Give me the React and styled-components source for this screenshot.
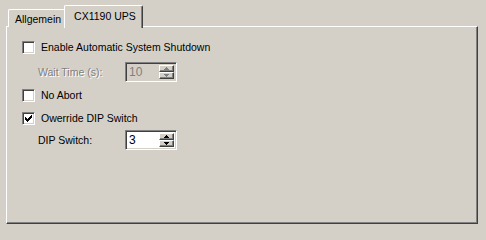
import React from "react";
import styled, { createGlobalStyle } from "styled-components";

const Global = createGlobalStyle`
  html, body { margin: 0; padding: 0; background: #d4d0c8; }
  body { width: 486px; height: 233px; overflow: hidden; }
  * { box-sizing: border-box; }
`;

const Window = styled.div`
  width: 486px;
  height: 233px;
  background: #d4d0c8;
  padding: 5px 0 0 6px;
  font-family: "Liberation Sans", Arial, sans-serif;
  font-size: 10.5px;
  color: #000;
`;

const TabStrip = styled.div`
  display: flex;
  align-items: flex-end;
  height: 22px;
  padding-left: 2px;
  position: relative;
  z-index: 2;
`;

const Tab = styled.div`
  display: flex;
  align-items: center;
  height: ${(p) => (p.$active ? "23px" : "18px")};
  margin-bottom: ${(p) => (p.$active ? "-1px" : "0")};
  margin-left: ${(p) => (p.$active ? "-1px" : "0")};
  padding: ${(p) => (p.$active ? "0 6px 2px 9px" : "1px 4px 0 6px")};
  background: #d4d0c8;
  border-top: 1px solid #fff;
  border-left: 1px solid #fff;
  border-right: ${(p) => (p.$active ? "1px solid #404040" : "none")};
  box-shadow: ${(p) => (p.$active ? "inset -1px 0 0 #808080" : "none")};
  border-top-left-radius: 2px;
  border-top-right-radius: 2px;
  white-space: nowrap;
`;

const Panel = styled.div`
  width: 472px;
  height: 198px;
  margin-top: -1px;
  border-top: 1px solid #fff;
  border-left: 1px solid #fff;
  border-right: 1px solid #404040;
  border-bottom: 1px solid #404040;
  box-shadow: inset -1px -1px 0 #808080;
  padding: 10px 0 0 14px;
  display: flex;
  flex-direction: column;
`;

const Row = styled.div`
  display: flex;
  align-items: center;
  height: 20px;
  margin-top: ${(p) => p.$gap || 0}px;
  padding-left: ${(p) => p.$indent || 0}px;
`;

const Box = styled.span`
  width: 13px;
  height: 13px;
  flex: none;
  background: #fff;
  border-top: 1px solid #808080;
  border-left: 1px solid #808080;
  border-right: 1px solid #fff;
  border-bottom: 1px solid #fff;
  box-shadow: inset 1px 1px 0 #404040, inset -1px -1px 0 #d4d0c8;
  display: flex;
  align-items: center;
  justify-content: center;
  margin-right: 6px;
`;

const Label = styled.span`
  white-space: nowrap;
  color: ${(p) => (p.$disabled ? "#808080" : "#000")};
  text-shadow: ${(p) => (p.$disabled ? "1px 1px 0 #fff" : "none")};
`;

const FieldLabel = styled(Label)`
  width: 87px;
`;

const Spin = styled.div`
  width: 52px;
  height: 20px;
  display: flex;
  background: ${(p) => (p.$disabled ? "#d4d0c8" : "#fff")};
  border-top: 1px solid #808080;
  border-left: 1px solid #808080;
  border-right: 1px solid #fff;
  border-bottom: 1px solid #fff;
  box-shadow: inset 1px 1px 0 #404040, inset -1px -1px 0 #d4d0c8;
  padding: 2px 2px 2px 3px;
`;

const SpinValue = styled.span`
  flex: 1;
  display: flex;
  align-items: center;
  font-size: 12px;
  color: ${(p) => (p.$disabled ? "#808080" : "#000")};
`;

const Buttons = styled.div`
  width: 15px;
  display: flex;
  flex-direction: column;
`;

const SpinBtn = styled.div`
  flex: 1;
  background: #d4d0c8;
  border-top: 1px solid #fff;
  border-left: 1px solid #fff;
  border-right: 1px solid #404040;
  border-bottom: 1px solid #404040;
  box-shadow: inset -1px -1px 0 #808080;
  display: flex;
  align-items: center;
  justify-content: center;
`;

const Check = () => (
  <svg width="7" height="7" viewBox="0 0 7 7">
    <path d="M0 2h1v1h1v1h1v-1h1v-1h1v-1h1v-1h1v3h-1v1h-1v1h-1v1h-1v1h-1v-1h-1v-1h-1z" fill="#000" />
  </svg>
);

const Arrow = ({ up, color }) => (
  <svg width="5" height="3" viewBox="0 0 5 3">
    {up ? (
      <path d="M2 0h1v1h1v1h1v1h-5v-1h1v-1h1z" fill={color} />
    ) : (
      <path d="M0 0h5v1h-1v1h-1v1h-1v-1h-1v-1h-1z" fill={color} />
    )}
  </svg>
);

const SpinBox = ({ value, disabled }) => {
  const c = disabled ? "#808080" : "#000";
  return (
    <Spin $disabled={disabled}>
      <SpinValue $disabled={disabled}>{value}</SpinValue>
      <Buttons>
        <SpinBtn><Arrow up color={c} /></SpinBtn>
        <SpinBtn><Arrow color={c} /></SpinBtn>
      </Buttons>
    </Spin>
  );
};

const CheckRow = ({ checked, label, gap }) => (
  <Row $gap={gap} $indent={1}>
    <Box>{checked && <Check />}</Box>
    <Label>{label}</Label>
  </Row>
);

export default function App() {
  return (
    <>
      <Global />
      <Window>
        <TabStrip>
          <Tab>Allgemein</Tab>
          <Tab $active>CX1190 UPS</Tab>
        </TabStrip>
        <Panel>
          <CheckRow label="Enable Automatic System Shutdown" />
          <Row $gap={5} $indent={17}>
            <FieldLabel $disabled>Wait Time (s):</FieldLabel>
            <SpinBox value="10" disabled />
          </Row>
          <CheckRow label="No Abort" gap={3} />
          <CheckRow label="Owerride DIP Switch" checked gap={3} />
          <Row $gap={2} $indent={17}>
            <FieldLabel>DIP Switch:</FieldLabel>
            <SpinBox value="3" />
          </Row>
        </Panel>
      </Window>
    </>
  );
}
